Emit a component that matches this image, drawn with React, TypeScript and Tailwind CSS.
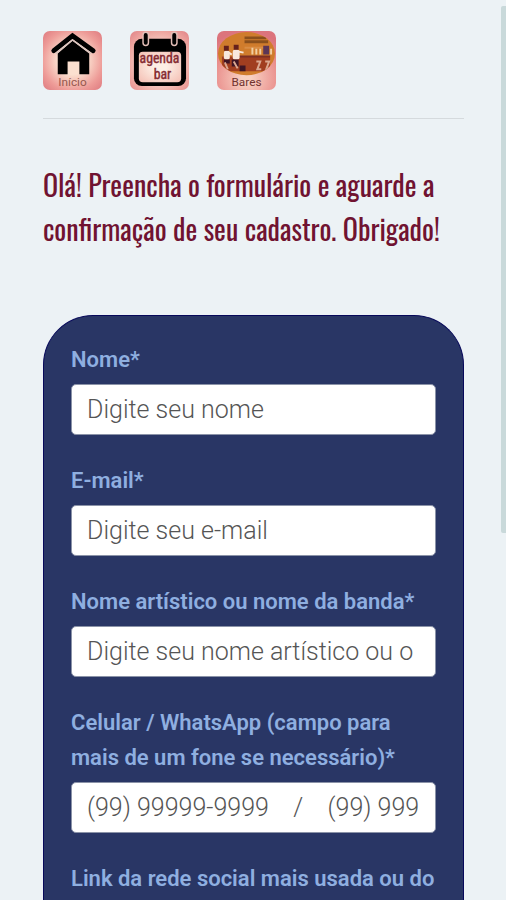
const fields = [
  { id: "nome", label: "Nome*", type: "text", placeholder: "Digite seu nome" },
  { id: "email", label: "E-mail*", type: "email", placeholder: "Digite seu e-mail" },
  {
    id: "banda",
    label: "Nome artístico ou nome da banda*",
    type: "text",
    placeholder: "Digite seu nome artístico ou o",
  },
  {
    id: "celular",
    label: "Celular / WhatsApp (campo para mais de um fone se necessário)*",
    type: "tel",
    placeholder: "(99) 99999-9999\u00a0\u00a0\u00a0 /\u00a0\u00a0\u00a0 (99) 999",
  },
];

function HomeIcon() {
  return (
    <svg viewBox="0 0 60 60" className="size-[59px]">
      <defs>
        <radialGradient id="home-glow" cx="50%" cy="50%" r="68%">
          <stop offset="0.35" stopColor="#fbe0d0" />
          <stop offset="0.75" stopColor="#ee9c98" />
          <stop offset="1" stopColor="#e07e82" />
        </radialGradient>
      </defs>
      <rect width="60" height="60" rx="7" fill="url(#home-glow)" />
      <path d="M15 23 L30 10 L47 23 V44 H37 V31 H25 V44 H15 Z" fill="#000" />
      <path d="M11 20 L30 5 L51 20" fill="none" stroke="#000" strokeWidth="5" strokeLinecap="round" />
      <path d="M13 23 L30 9 L49 23" fill="none" stroke="#d9c5bf" strokeWidth="1.5" />
      <text x="30" y="56" textAnchor="middle" fontSize="12" fill="#96574d" fontFamily="Roboto, sans-serif">
        Início
      </text>
    </svg>
  );
}

function AgendaIcon() {
  return (
    <svg viewBox="0 0 60 60" className="size-[59px]">
      <defs>
        <radialGradient id="agenda-glow" cx="50%" cy="55%" r="75%">
          <stop offset="0.2" stopColor="#fdf0e6" />
          <stop offset="0.7" stopColor="#efa9a2" />
          <stop offset="1" stopColor="#e08085" />
        </radialGradient>
        <radialGradient id="agenda-page" cx="50%" cy="50%" r="75%">
          <stop offset="0.2" stopColor="#fdf0e6" />
          <stop offset="1" stopColor="#f3b9ae" />
        </radialGradient>
      </defs>
      <rect width="60" height="60" rx="7" fill="url(#agenda-glow)" />
      <rect x="4" y="8" width="53" height="48" rx="8" fill="#000" />
      <rect x="9" y="21" width="43" height="31" rx="4" fill="url(#agenda-page)" />
      <path d="M16 4 V12 M45 4 V12" stroke="#e3bdb6" strokeWidth="7" strokeLinecap="round" />
      <path d="M16 4 V12 M45 4 V12" stroke="#000" strokeWidth="4" strokeLinecap="round" />
      <g
        fill="#842a32"
        stroke="#842a32"
        strokeWidth="0.4"
        textAnchor="middle"
        fontFamily="'Liberation Sans Narrow', 'Roboto Condensed', 'Liberation Sans', sans-serif"
      >
        <text x="30" y="33" fontSize="14">
          agenda
        </text>
        <text x="33" y="49" fontSize="14">
          bar
        </text>
      </g>
    </svg>
  );
}

function BarsIcon() {
  return (
    <svg viewBox="0 0 60 60" className="size-[59px]">
      <defs>
        <radialGradient id="bars-glow" cx="50%" cy="80%" r="80%">
          <stop offset="0.1" stopColor="#f8d0c2" />
          <stop offset="0.7" stopColor="#e98d8b" />
          <stop offset="1" stopColor="#dc747c" />
        </radialGradient>
        <clipPath id="bars-oval">
          <ellipse cx="30" cy="23" rx="29" ry="22" />
        </clipPath>
      </defs>
      <rect width="60" height="60" rx="7" fill="url(#bars-glow)" />
      <g clipPath="url(#bars-oval)">
        <rect width="60" height="46" fill="#d07c2c" />
        <path d="M28 7 H50 M28 11 H52" stroke="#8a4f1c" strokeWidth="3" />
        <path d="M28 17 H50" stroke="#d98d45" strokeWidth="2" />
        <path d="M5 26 H54 V41 H5 Z" fill="#a13e20" />
        <path d="M22 26 H54" stroke="#7d2f22" strokeWidth="2" />
        {/* customers at the counter */}
        <rect x="7" y="20" width="6" height="9" rx="2" fill="#f8e8dd" />
        <rect x="16" y="19" width="7" height="10" rx="2" fill="#f8e8dd" />
        <path d="M12 22 L15 24 M22 21 L27 22" stroke="#f8e8dd" strokeWidth="2" />
        <path d="M7 15 H12 V20 H7 Z M17 14 H22 V19 H17 Z" fill="#65201c" />
        <path d="M7 29 H13 V33 H7 Z M15 29 H22 V36 H15 Z M23 35 H29 V41 H23 Z" fill="#3e1524" />
        <path d="M8 32 L11 39 M17 31 L21 38 M40 31 H44 L41 39 H45 M49 31 H53 L50 39 H54" fill="none" stroke="#dba891" strokeWidth="2" />
        <path d="M47 15 H53 V24 H47 Z" fill="#5b3556" />
        <path d="M36 17 V24 M40 18 V24 M44 18 V24 M55 18 V24" stroke="#f1cfa2" strokeWidth="2" />
      </g>
      <text x="30" y="56" textAnchor="middle" fontSize="12" fill="#713330" fontFamily="Roboto, sans-serif">
        Bares
      </text>
    </svg>
  );
}

const links = [
  { name: "Início", icon: <HomeIcon /> },
  { name: "Agenda bar", icon: <AgendaIcon /> },
  { name: "Bares", icon: <BarsIcon /> },
];

const labelClass = "block text-[22px] leading-[35px] font-semibold text-[#8fafe0]";

export default function App() {
  return (
    <div className="relative flex h-screen flex-col overflow-hidden bg-[#ecf2f5] pr-[42px] pl-[43px] font-['Roboto',sans-serif]">
      <header className="border-b border-[#d5dadd] pt-[31px] pb-7">
        <nav className="flex gap-7">
          {links.map((link) => (
            <a key={link.name} href="#" aria-label={link.name}>
              {link.icon}
            </a>
          ))}
        </nav>
      </header>

      <h1 className="mt-11 mb-16 text-[28px] leading-[44px] font-normal whitespace-nowrap text-[#701331] font-['Oswald','Roboto_Condensed','Liberation_Sans_Narrow','Open_Sans_Condensed',sans-serif]">
        Olá! Preencha o formulário e aguarde a
        <br />
        confirmação de seu cadastro. Obrigado!
      </h1>

      <form className="flex flex-1 flex-col gap-7 rounded-t-[50px] border border-b-0 border-[#07095a] bg-[#293665] px-[27px] pt-[26px]">
        {fields.map((field) => (
          <div key={field.id}>
            <label htmlFor={field.id} className={labelClass}>
              {field.label}
            </label>
            <input
              id={field.id}
              type={field.type}
              placeholder={field.placeholder}
              className="mt-[7px] block h-[51px] w-full rounded-[5px] border border-[#8b93a8] bg-white px-[15px] text-[25px] font-light text-[#333] outline-none placeholder:text-[#555]"
            />
          </div>
        ))}
        <p className={labelClass}>Link da rede social mais usada ou do</p>
      </form>

      {/* scroll indicator */}
      <div className="absolute top-[6px] right-0 h-[527px] w-[5px] rounded-l-xs bg-[#c9d9da]" />
    </div>
  );
}
